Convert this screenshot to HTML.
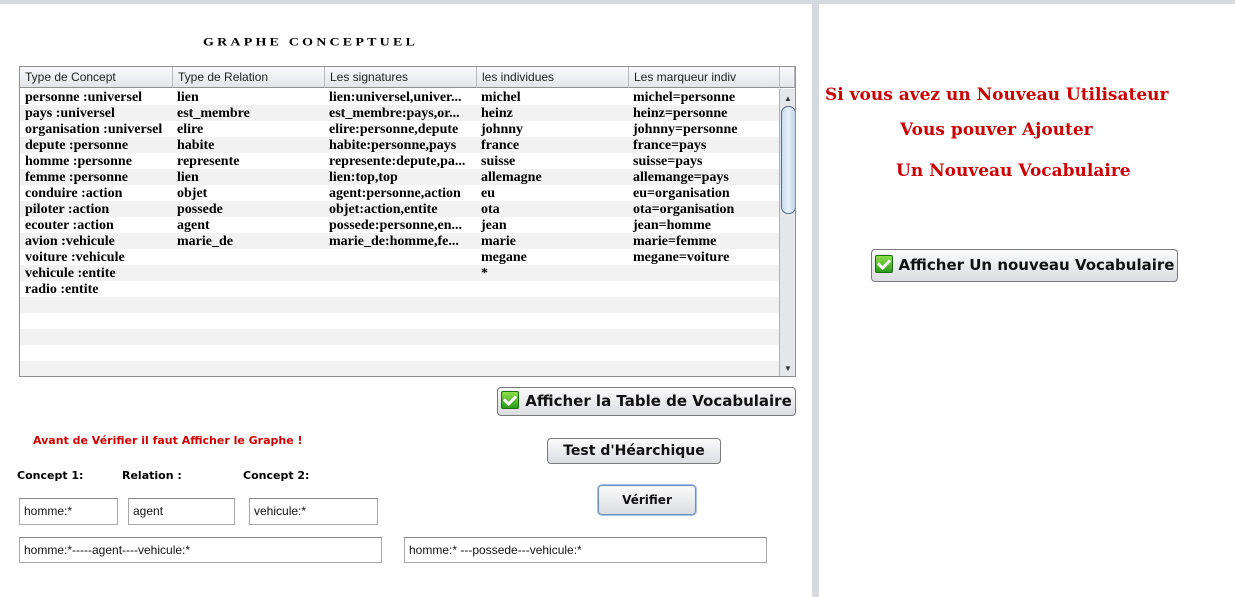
<!DOCTYPE html>
<html><head><meta charset="utf-8"><style>
body{margin:0;width:1235px;height:597px;background:#fff;position:relative;overflow:hidden;font-family:"Liberation Sans",sans-serif}
.a{position:absolute}
.topbar{left:0;top:0;width:1235px;height:4px;background:#d6d9e0}
.div{left:812px;top:0;width:7px;height:597px;background:#d6d9e0}
.title{left:203px;top:36px;font:bold 14px "Liberation Serif",serif;letter-spacing:3.2px;transform:scaleY(0.85);transform-origin:left top}
.tbl{left:19px;top:66px;width:775px;height:309px;border:1px solid #8e8f8f;background:#fff;overflow:hidden}
.hd{position:absolute;top:0;height:21px;border-bottom:1px solid #8e8f8f;background:linear-gradient(#fafafb,#e3e5ea);border-right:1px solid #b8b9bc;font-size:12px;line-height:21px;padding-left:5px;box-sizing:border-box;color:#222}
.row{position:absolute;left:0;width:759px;height:16px}
.row.g{background:#f2f2f2}
.c{position:absolute;font:bold 14px "Liberation Serif",serif;line-height:16px;white-space:nowrap}
.sb{position:absolute;left:759px;top:22px;width:16px;height:287px;background:#e6e7ea;border-left:1px solid #b0b0b0}
.thumb{position:absolute;left:1px;top:17px;width:13px;height:106px;border:1px solid #5a6c84;border-radius:7px;background:linear-gradient(90deg,#c9dcee,#e6f0fa,#bcd3ea)}
.btn{border:1px solid #7a7a7a;border-radius:4px;background:linear-gradient(#fbfbfb,#dcdde2);font:bold 14px "DejaVu Sans",sans-serif;color:#111;text-align:center;box-sizing:border-box}
.chk{display:inline-block;width:16px;height:16px;background:linear-gradient(#8ee04a,#2a9a1a);border:1px solid #1d6b12;border-radius:2px;vertical-align:-3px;margin-right:6px;position:relative}
.chk:after{content:"";position:absolute;left:4px;top:1px;width:5px;height:9px;border:solid #fff;border-width:0 3px 3px 0;transform:rotate(45deg)}
.red{color:#d00000}
.lbl{font:bold 11px "DejaVu Sans",sans-serif;top:469px}
.inp{border:1px solid #a8a8a8;border-top-color:#888;box-sizing:border-box;font-size:12px;line-height:24px;padding-left:4px;color:#111}
.rs{font:bold 17px "DejaVu Serif","Liberation Serif",serif;color:#cc0000;white-space:nowrap}
</style></head><body>
<div class="a topbar"></div>
<div class="a div"></div>
<div class="a title">GRAPHE CONCEPTUEL</div>
<div class="a tbl">
<div class="hd" style="left:0;width:153px">Type de Concept</div>
<div class="hd" style="left:153px;width:152px">Type de Relation</div>
<div class="hd" style="left:305px;width:152px">Les signatures</div>
<div class="hd" style="left:457px;width:152px">les individues</div>
<div class="hd" style="left:609px;width:151px">Les marqueur indiv</div>
<div class="hd" style="left:760px;width:15px"></div>
<div class="row" style="top:22px"></div><div class="row g" style="top:38px"></div><div class="row" style="top:54px"></div><div class="row g" style="top:70px"></div><div class="row" style="top:86px"></div><div class="row g" style="top:102px"></div><div class="row" style="top:118px"></div><div class="row g" style="top:134px"></div><div class="row" style="top:150px"></div><div class="row g" style="top:166px"></div><div class="row" style="top:182px"></div><div class="row g" style="top:198px"></div><div class="row" style="top:214px"></div><div class="row g" style="top:230px"></div><div class="row" style="top:246px"></div><div class="row g" style="top:262px"></div><div class="row" style="top:278px"></div><div class="row g" style="top:294px"></div>
<div class="c" style="left:5px;top:23px">personne :universel<br>pays :universel<br>organisation :universel<br>depute :personne<br>homme :personne<br>femme :personne<br>conduire :action<br>piloter :action<br>ecouter :action<br>avion :vehicule<br>voiture :vehicule<br>vehicule :entite<br>radio :entite</div>
<div class="c" style="left:157px;top:23px">lien<br>est_membre<br>elire<br>habite<br>represente<br>lien<br>objet<br>possede<br>agent<br>marie_de</div>
<div class="c" style="left:309px;top:23px">lien:universel,univer...<br>est_membre:pays,or...<br>elire:personne,depute<br>habite:personne,pays<br>represente:depute,pa...<br>lien:top,top<br>agent:personne,action<br>objet:action,entite<br>possede:personne,en...<br>marie_de:homme,fe...</div>
<div class="c" style="left:461px;top:23px">michel<br>heinz<br>johnny<br>france<br>suisse<br>allemagne<br>eu<br>ota<br>jean<br>marie<br>megane<br>*</div>
<div class="c" style="left:613px;top:23px">michel=personne<br>heinz=personne<br>johnny=personne<br>france=pays<br>suisse=pays<br>allemange=pays<br>eu=organisation<br>ota=organisation<br>jean=homme<br>marie=femme<br>megane=voiture</div>
<div class="sb"><div style="position:absolute;left:4px;top:5px;font-size:8px;color:#333">▲</div><div class="thumb"></div><div style="position:absolute;left:4px;bottom:3px;font-size:8px;color:#333">▼</div></div>
</div>
<div class="a btn" style="left:497px;top:387px;width:299px;height:29px;line-height:27px;font-size:15px"><span class="chk"></span>Afficher la Table de Vocabulaire</div>
<div class="a red" style="left:33px;top:434px;font:bold 11px 'DejaVu Sans',sans-serif">Avant de Vérifier il faut Afficher le Graphe !</div>
<div class="a btn" style="left:547px;top:438px;width:174px;height:26px;line-height:24px">Test d'Héarchique</div>
<div class="a btn" style="left:598px;top:485px;width:98px;height:30px;line-height:28px;font-size:12px;border-color:#6d8fbf;box-shadow:0 0 0 1px #a9c3e6">Vérifier</div>
<div class="a lbl" style="left:17px">Concept 1:</div>
<div class="a lbl" style="left:122px">Relation :</div>
<div class="a lbl" style="left:243px">Concept 2:</div>
<div class="a inp" style="left:19px;top:498px;width:99px;height:27px">homme:*</div>
<div class="a inp" style="left:128px;top:498px;width:107px;height:27px">agent</div>
<div class="a inp" style="left:249px;top:498px;width:129px;height:27px">vehicule:*</div>
<div class="a inp" style="left:19px;top:537px;width:363px;height:26px">homme:*-----agent----vehicule:*</div>
<div class="a inp" style="left:404px;top:537px;width:363px;height:26px">homme:* ---possede---vehicule:*</div>
<div class="a rs" style="left:825px;top:85px">Si vous avez un Nouveau Utilisateur</div>
<div class="a rs" style="left:900px;top:120px">Vous pouver Ajouter</div>
<div class="a rs" style="left:896px;top:161px">Un Nouveau Vocabulaire</div>
<div class="a btn" style="left:871px;top:249px;width:307px;height:33px;line-height:31px;font-size:15px"><span class="chk"></span>Afficher Un nouveau Vocabulaire</div>
</body></html>
